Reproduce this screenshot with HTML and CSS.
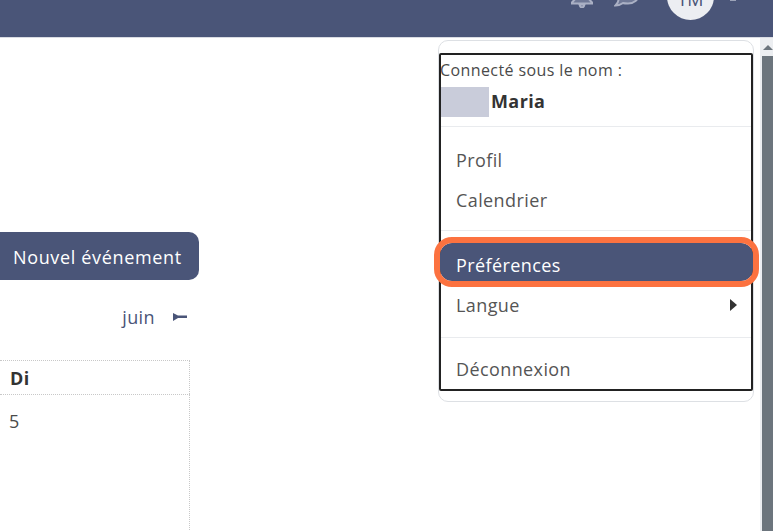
FILE: index.html
```html
<!DOCTYPE html>
<html lang="fr">
<head>
    <meta charset="UTF-8">
    <title>Calendrier</title>
    <link rel="stylesheet" href="styles.css">
</head>
<body>

    <!-- Top bar, cut off by the screenshot -->
    <header class="topbar">
        <svg class="bar-icon bell" width="24" height="24" viewBox="0 0 24 24"><path d="M12 2C8 2 6 5 6 9v5l-4 4.500v1h20v-1L18 14V9c0-4-2-7-6-7z"/><path d="M9.500 20.500c.5 2 1.500 3 2.500 3s2-1 2.500-3z"/></svg>
        <svg class="bar-icon bubble" width="26" height="24" viewBox="0 0 26 24"><path d="M14 2C8 2 3 6 3 12c0 1.500.5 3 1.500 4.500C4.500 19 3 21 1.500 22.500c3 0 5.500-1 7.500-2.500 1.500.5 3 .5 5 .5 6 0 10.500-3.500 10.500-9.500S20 2 14 2z"/></svg>
        <div class="avatar">TM</div>
        <span class="caret-up"></span>
    </header>

    <div class="page">
        <main class="content">
            <a class="new-event">Nouvel événement</a>
            <div class="month-nav">
                <span>juin</span>
                <svg width="14" height="8" viewBox="0 0 14 8"><path d="M0 0l5 2.500h9v2.500H5L0 8z" class="arrow"/></svg>
            </div>
            <table class="calendar">
                <tr><th>Di</th></tr>
                <tr><td>5</td></tr>
            </table>
        </main>

        <div class="scrollbar">
            <span class="scroll-up"></span>
            <div class="scroll-thumb"></div>
        </div>
    </div>

    <!-- User menu -->
    <div class="user-menu">
        <div class="menu-inner">
            <div class="logged-label">Connecté sous le nom :</div>
            <div class="logged-user"><span class="redacted"></span><strong>Maria</strong></div>
            <div class="divider divider-user"></div>
            <a class="menu-item">Profil</a>
            <a class="menu-item">Calendrier</a>
            <div class="divider divider-prefs"></div>
            <a class="menu-item selected">Préférences</a>
            <a class="menu-item">Langue <span class="caret-right"></span></a>
            <div class="divider divider-logout"></div>
            <a class="menu-item logout">Déconnexion</a>
        </div>
    </div>

</body>
</html>
```

FILE: styles.css
```css
body {
    margin: 0;
    height: 531px;
    overflow: hidden;
    background-color: #fff;
    font-family: "Open Sans", "Noto Sans", sans-serif;
    font-size: 18px;
    letter-spacing: 0.4px;
    color: #4a4a4a;
    display: flex;
    flex-direction: column;
}

.topbar {
    height: 37px;
    flex: none;
    background-color: #4a5578;
    border-bottom: 1px solid #d9dbe3;
    display: flex;
    justify-content: flex-end;
    align-items: flex-end;
    padding-right: 37px;
    overflow: hidden;
}

.bar-icon path {
    fill: #6f7896;
    stroke: #aab0c4;
    stroke-width: 2;
}

.bell {
    margin-right: 20px;
    margin-bottom: 29px;
}

.bubble {
    margin-bottom: 30px;
}

.avatar {
    width: 47px;
    height: 47px;
    flex: none;
    margin: 0 0 17px 27px;
    border-radius: 50%;
    background-color: #eceef2;
    color: #4a5578;
    line-height: 18px;
    letter-spacing: 0;
    text-align: center;
    padding-top: 17px;
    box-sizing: border-box;
}

.caret-up {
    width: 6px;
    height: 6px;
    flex: none;
    background-color: #9ca3b8;
    margin: 0 0 36px 16px;
}

.page {
    flex: 1;
    display: flex;
    justify-content: space-between;
    min-height: 0;
}

.content {
    width: 190px;
    padding-top: 194px;
}

.new-event {
    display: block;
    width: 199px;
    height: 48px;
    box-sizing: border-box;
    padding-left: 13px;
    line-height: 50px;
    background-color: #4a5578;
    color: #fff;
    border-radius: 0 10px 10px 0;
    letter-spacing: 0.65px;
    white-space: nowrap;
}

.month-nav {
    display: flex;
    justify-content: flex-end;
    align-items: center;
    gap: 18px;
    height: 24px;
    margin-top: 25px;
    padding-right: 3px;
    color: #4a5578;
}

.arrow {
    fill: #4a5578;
}

.calendar {
    width: 190px;
    margin-top: 31px;
    border-collapse: collapse;
    border: 1px dotted #c8c8c8;
    border-left: none;
}

.calendar th, .calendar td {
    text-align: left;
    padding: 0 9px;
}

.calendar th {
    height: 33px;
    padding-left: 10px;
    color: #333;
    border-bottom: 1px dotted #c8c8c8;
}

.calendar td {
    height: 140px;
    vertical-align: top;
    padding-top: 14px;
}

.scrollbar {
    width: 13px;
    box-sizing: border-box;
    padding-left: 2px;
    background-color: #eceef1;
    display: flex;
    flex-direction: column;
    align-items: center;
}

.scroll-up {
    margin-top: 7px;
    border: 5px solid transparent;
    border-top: none;
    border-bottom: 5px solid #6c757d;
}

.scroll-thumb {
    flex: 1;
    width: 100%;
    margin-top: 6px;
    background-color: #6c757d;
}

/* Dropdown sits over the page */
.user-menu {
    position: absolute;
    left: 438px;
    top: 40px;
    width: 316px;
    height: 362px;
    box-sizing: border-box;
    padding-top: 12px;
    background-color: #fff;
    border: 1px solid #dde0e4;
    border-radius: 10px;
}

.menu-inner {
    height: 338px;
    box-sizing: border-box;
    border: 2px solid #222;
    border-radius: 2px;
    padding-top: 3px;
}

.logged-label {
    font-size: 16px;
    line-height: 24px;
    white-space: nowrap;
    margin-left: -1px;
}

.logged-user {
    display: flex;
    align-items: center;
    height: 30px;
    margin-top: 5px;
}

.redacted {
    width: 48px;
    height: 30px;
    background-color: #c9ccda;
}

.logged-user strong {
    margin: -2px 0 0 2px;
    color: #333;
}

.divider {
    height: 1px;
    background-color: #e9ebee;
}

.divider-user {
    margin: 9px 0 13px;
}

.divider-prefs {
    margin: 10px 0 12px;
}

.divider-logout {
    margin: 12px 0 13px;
}

.menu-item {
    display: flex;
    justify-content: space-between;
    align-items: center;
    height: 40px;
    padding: 0 15px;
    color: #555;
}

.menu-item.selected {
    height: 33px;
    padding-top: 5px;
    margin: 0 -2px 4px -1px;
    padding-left: 16px;
    background-color: #4a5578;
    color: #fff;
    border-radius: 12px;
    outline: 6px solid #fc7240;
}

.menu-item.logout {
    height: 36px;
}

.caret-right {
    border: 6px solid transparent;
    border-right: none;
    border-left: 7px solid #333;
    margin-right: -1px;
}
```
